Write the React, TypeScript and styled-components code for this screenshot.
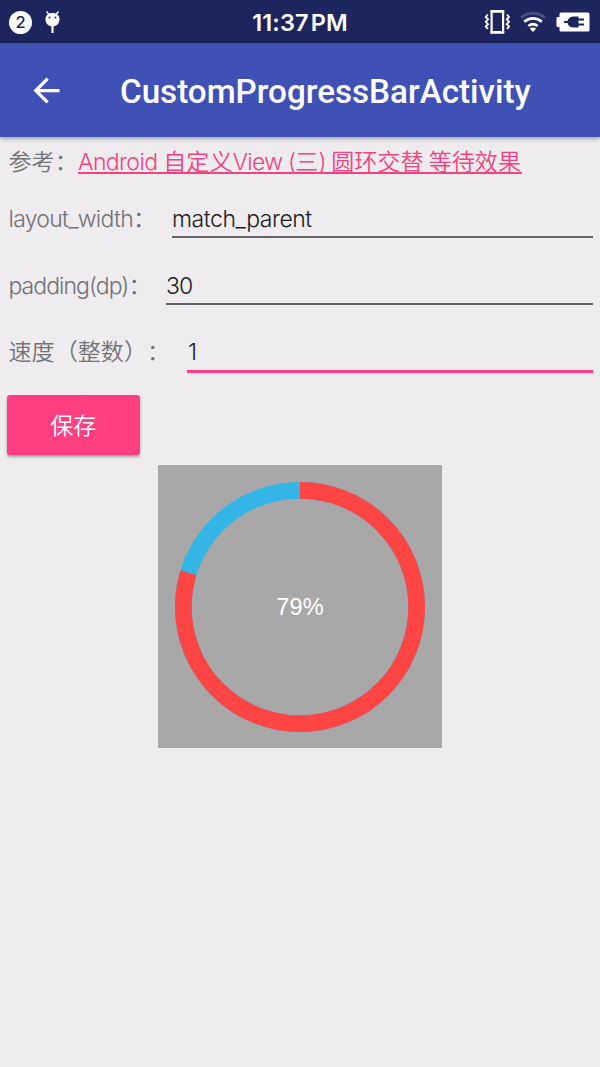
import React from 'react';
import styled, { createGlobalStyle } from 'styled-components';

const GlobalStyle = createGlobalStyle`
  * { box-sizing: border-box; }
  html, body { margin: 0; padding: 0; background: #eeecef; }
  body {
    font-family: Inter, "Noto Sans CJK SC", sans-serif;
    text-spacing-trim: space-all;
  }
`;

const Screen = styled.div`
  width: 600px;
  height: 1067px;
  display: flex;
  flex-direction: column;
  overflow: hidden;
  background: #eeecef;
`;

const StatusBar = styled.header`
  height: 43px;
  flex: none;
  display: grid;
  grid-template-columns: 1fr auto 1fr;
  align-items: center;
  background: #1c255e;
`;

const StatusGroup = styled.div<{ $end?: boolean }>`
  display: flex;
  align-items: center;
  justify-content: ${p => (p.$end ? 'flex-end' : 'flex-start')};
  gap: ${p => (p.$end ? '10px' : '12px')};
  padding: ${p => (p.$end ? '0 10px 0 0' : '0 0 0 9px')};
`;

const Badge = styled.span`
  width: 23px;
  height: 23px;
  border-radius: 50%;
  display: flex;
  align-items: center;
  justify-content: center;
  background: #fff;
  color: #1c255e;
  font: 500 16.5px/23px Inter, sans-serif;
`;

const Clock = styled.time`
  color: #fff;
  font: 600 23.5px/42px Inter, sans-serif;
  letter-spacing: 0.1px;
  word-spacing: -4px;
  padding-top: 2px;
`;

const Toolbar = styled.nav`
  height: 94px;
  flex: none;
  position: relative;
  display: flex;
  align-items: center;
  padding-left: 27px;
  gap: 54px;
  background: #3f51b5;
  box-shadow: 0 1px 5px rgba(0, 0, 0, 0.45);
`;

const BackButton = styled.button`
  width: 39px;
  height: 39px;
  padding: 0;
  border: 0;
  background: none;
`;

const Title = styled.h1`
  margin: 4px 0 0;
  color: #fff;
  font: 500 33.2px/40px Roboto, sans-serif;
  white-space: nowrap;
`;

const Form = styled.main`
  display: flex;
  flex-direction: column;
  padding: 8px 7px 0 8.5px;
`;

const Text = styled.span<{ $track?: number }>`
  font-size: 23px;
  line-height: 34px;
  font-weight: 300;
  white-space: pre;
  letter-spacing: ${p => p.$track ?? 0}px;
`;

const Hanzi = styled.span`
  font-family: "Noto Sans CJK SC", sans-serif;
  font-size: 23.1px;
  line-height: 30px;
  font-weight: 350;
  white-space: pre;
`;

const Label = styled.div<{ $width: number }>`
  flex: none;
  display: flex;
  width: ${p => p.$width}px;
  color: #737275;
`;

const Reference = styled.div`
  height: 34px;
  display: flex;
`;

const Link = styled.a`
  display: flex;
  height: 29px;
  padding-right: 1px;
  color: #f5427f;
  border-bottom: 2px solid #f5427f;
`;

const Field = styled.div<{ $height: number; $top: number }>`
  height: ${p => p.$height}px;
  padding-top: ${p => p.$top}px;
  display: flex;
`;

const Entry = styled.div<{ $active?: boolean }>`
  flex: 1;
  height: ${p => (p.$active ? 38 : 36)}px;
  padding-left: ${p => (p.$active ? 1 : 0)}px;
  color: #1b1b1d;
  border-bottom: ${p => (p.$active ? '3px solid #ff3d80' : '2px solid #656466')};
`;

const SaveButton = styled.button`
  width: 133.5px;
  height: 60px;
  margin: 0 0 0 -2px;
  padding: 0 0 3px;
  border: 0;
  border-radius: 3px;
  background: #ff3f80;
  color: #fff;
  box-shadow: 0 2px 3px rgba(0, 0, 0, 0.32);
`;

const Progress = styled.section`
  width: 284px;
  height: 283px;
  margin: 10px auto 0;
  display: grid;
  place-items: center;
  background: #a9a8a9;
`;

const Ring = styled.svg`
  grid-area: 1 / 1;
  display: block;
`;

const Percent = styled.span`
  grid-area: 1 / 1;
  color: #fff;
  font: 23.5px/28px "Liberation Sans", sans-serif;
  letter-spacing: 0.2px;
  padding-top: 1px;
`;

const AndroidIcon = () => (
  <svg width="18" height="24" viewBox="0 0 18 24">
    <path d="M2.500 1.500 5 4.500M14.500 1.500 12 4.500" stroke="#fff" strokeWidth="1.400" />
    <path d="M8.500 3C13 3 15.500 5.600 15.500 9.300S13 16.500 8.500 16.500 1.500 13 1.500 9.300 4 3 8.500 3Z" fill="#fff" />
    <circle cx="5.500" cy="7.500" r="1" fill="#1c255e" />
    <circle cx="11.500" cy="7.500" r="1" fill="#1c255e" />
    <path d="M8.500 16v7" stroke="#fff" strokeWidth="2.200" />
  </svg>
);

const VibrateIcon = () => (
  <svg width="26" height="26" viewBox="0 0 26 26" fill="none" stroke="#fff">
    <path d="M7.600 2.500h11.500v21H7.600z" strokeWidth="2.200" />
    <path d="M6.500 2.200h13.700M6.500 23.300h13.700" strokeWidth="2.600" />
    <path d="M3.800 5.500 1.800 8 4 10.300 1.800 12.800 4 15.200 1.800 17.600 3.800 20M23 5.500 25 8 22.800 10.300 25 12.800 22.800 15.200 25 17.600 23 20" strokeWidth="1.900" />
  </svg>
);

const WifiIcon = () => (
  <svg width="26" height="22" viewBox="0 0 26 22" fill="none">
    <path d="M1 6.700C8 .8 18 .8 25 6.700" stroke="#464f83" strokeWidth="3" />
    <path d="M4.200 10.700C9.500 6.200 16.500 6.200 21.800 10.700M8.400 15C11.200 12.700 14.800 12.700 17.600 15" stroke="#fff" strokeWidth="2.800" />
    <path d="M13 21 9.900 17.800Q13 15.300 16.100 17.800Z" fill="#fff" />
  </svg>
);

const BatteryIcon = () => (
  <svg width="34" height="20" viewBox="0 0 34 20">
    <path d="M5 .5h27a1.500 1.500 0 0 1 1.500 1.500v16a1.500 1.500 0 0 1-1.500 1.500H5A1.500 1.500 0 0 1 3.500 18v-3H1.700A1.200 1.200 0 0 1 .5 13.800V6.200A1.200 1.200 0 0 1 1.700 5h1.800V2A1.500 1.500 0 0 1 5 .5Z" fill="#fff" />
    <path d="M8 9h3.500C12.300 6 14.500 4.500 17.500 4.500h5V6.500H28v2h-5.500v3H28v2h-5.500v2h-5c-3 0-5.200-1.500-6-4.500H8Z" fill="#1c255e" />
  </svg>
);

const FULL = 2 * Math.PI * 116.7;

function ProgressRing({ value, sweep }: { value: number; sweep: number }) {
  return (
    <Progress>
      <Ring width="284" height="283" viewBox="0 0 284 283" fill="none" strokeWidth="16.700">
        <circle cx="142" cy="142" r="116.700" stroke="#33b5e5" />
        <circle
          cx="142"
          cy="142"
          r="116.700"
          stroke="#ff4444"
          strokeDasharray={`${(FULL * sweep) / 360} ${FULL}`}
          transform="rotate(-90 142 142)"
        />
      </Ring>
      <Percent>{value}%</Percent>
    </Progress>
  );
}

export default function App() {
  return (
    <Screen>
      <GlobalStyle />
      <StatusBar>
        <StatusGroup>
          <Badge>2</Badge>
          <AndroidIcon />
        </StatusGroup>
        <Clock>11:37 PM</Clock>
        <StatusGroup $end>
          <VibrateIcon />
          <WifiIcon />
          <BatteryIcon />
        </StatusGroup>
      </StatusBar>
      <Toolbar>
        <BackButton aria-label="Back">
          <svg width="39" height="39" viewBox="0 0 24 24" fill="#fff">
            <path d="M20 11H7.830l5.590-5.590L12 4l-8 8 8 8 1.410-1.410L7.830 13H20v-2z" />
          </svg>
        </BackButton>
        <Title>CustomProgressBarActivity</Title>
      </Toolbar>
      <Form>
        <Reference>
          <Label $width={69.5}><Hanzi>参考：</Hanzi></Label>
          <Link>
            <Text $track={-0.6}>Android </Text>
            <Hanzi>自定义</Hanzi>
            <Text $track={-0.7}>View (</Text>
            <Hanzi>三</Hanzi>
            <Text $track={-0.9}>) </Text>
            <Hanzi>圆环交替 等待效果</Hanzi>
          </Link>
        </Reference>
        <Field $height={66} $top={23}>
          <Label $width={163.5}>
            <Text $track={-0.72}>layout_width</Text>
            <Hanzi>：</Hanzi>
          </Label>
          <Entry><Text $track={-0.45}>match_parent</Text></Entry>
        </Field>
        <Field $height={67} $top={24}>
          <Label $width={157.5}>
            <Text $track={-0.95}>padding(dp)</Text>
            <Hanzi>：</Hanzi>
          </Label>
          <Entry><Text $track={-0.9}>30</Text></Entry>
        </Field>
        <Field $height={83} $top={23}>
          <Label $width={178.5}><Hanzi>速度（整数）：</Hanzi></Label>
          <Entry $active><Text>1</Text></Entry>
        </Field>
        <SaveButton><Hanzi>保存</Hanzi></SaveButton>
      </Form>
      <ProgressRing value={79} sweep={287} />
    </Screen>
  );
}
